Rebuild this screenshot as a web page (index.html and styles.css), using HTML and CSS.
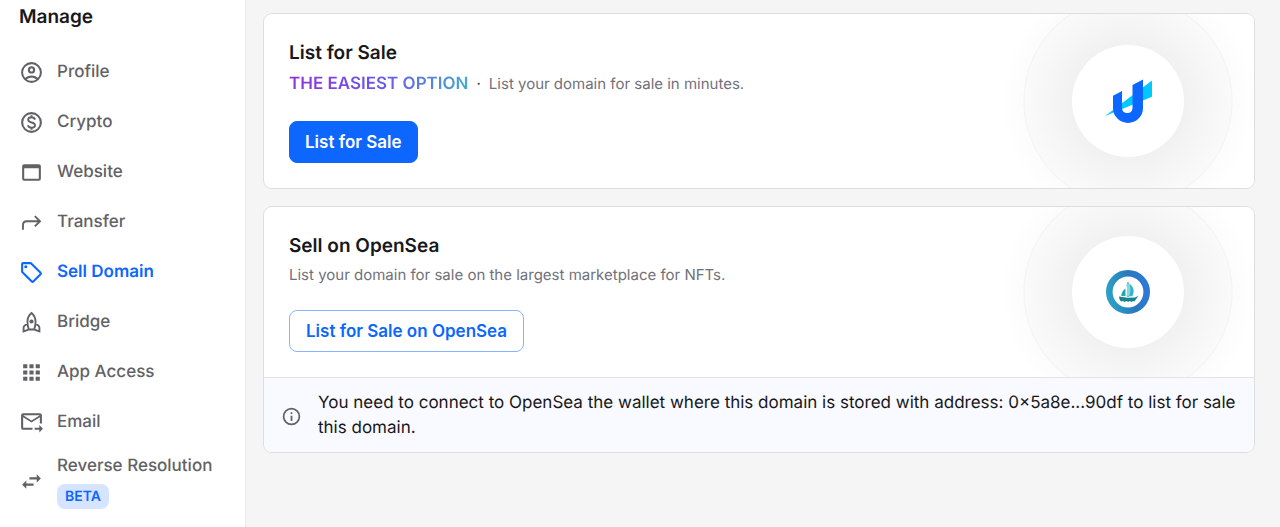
FILE: index.html
```html
<!DOCTYPE html>
<html lang="en">
<head>
<meta charset="utf-8">
<meta name="viewport" content="width=device-width, initial-scale=1">
<title>Sell Domain</title>
<link rel="stylesheet" href="styles.css">
</head>
<body>
<div class="layout">
  <aside class="sidebar">
    <h2 class="sidebar-title">Manage</h2>
    <nav class="nav" aria-label="Manage">
      <a class="nav-item" href="#profile">
        <svg class="icon" viewBox="0 0 24 24" aria-hidden="true"><path d="M12 2a10 10 0 1 0 0 20 10 10 0 0 0 0-20zM7.350 18.500C8.660 17.560 10.260 17 12 17s3.340.56 4.650 1.500C15.340 19.440 13.740 20 12 20s-3.340-.56-4.650-1.500zm10.790-1.380a9.950 9.950 0 0 0-12.280 0A8 8 0 1 1 20 12c0 1.950-.7 3.730-1.860 5.120zM12 6a3.500 3.500 0 1 0 0 7 3.500 3.500 0 0 0 0-7zm0 5a1.500 1.500 0 1 1 0-3 1.500 1.500 0 0 1 0 3z"/></svg>
        <span>Profile</span>
      </a>
      <a class="nav-item" href="#crypto">
        <svg class="icon" viewBox="0 0 24 24" aria-hidden="true"><path d="M12 2a10 10 0 1 0 0 20 10 10 0 0 0 0-20zm0 18a8 8 0 1 1 0-16 8 8 0 0 1 0 16z"/><path class="stroke" d="M15.400 9.200C14.900 7.700 13.600 7 12 7c-1.900 0-3.200.95-3.200 2.450 0 3.400 6.600 1.700 6.600 5.100 0 1.500-1.500 2.450-3.400 2.450-1.800 0-3.100-.9-3.500-2.300M12 5v2M12 17v2"/></svg>
        <span>Crypto</span>
      </a>
      <a class="nav-item" href="#website">
        <svg class="icon" viewBox="0 0 24 24" aria-hidden="true"><path d="M19 4H5a2 2 0 0 0-2 2v12a2 2 0 0 0 2 2h14a2 2 0 0 0 2-2V6a2 2 0 0 0-2-2zm0 14H5V8h14v10z"/></svg>
        <span>Website</span>
      </a>
      <a class="nav-item" href="#transfer">
        <svg class="icon" viewBox="0 0 24 24" aria-hidden="true"><path class="stroke" d="M3.800 19v-4.500c0-2.200 1.500-3.700 3.700-3.700H20M15.200 5.800l5 5-5 5"/></svg>
        <span>Transfer</span>
      </a>
      <a class="nav-item active" href="#sell" aria-current="page">
        <svg class="icon" viewBox="0 0 24 24" aria-hidden="true"><path d="m21.410 11.580-9-9C12.050 2.220 11.550 2 11 2H4c-1.100 0-2 .9-2 2v7c0 .55.22 1.050.59 1.420l9 9c.36.36.86.58 1.410.58s1.050-.22 1.410-.59l7-7c.37-.36.59-.86.59-1.410s-.23-1.060-.59-1.420zM13 20.010 4 11V4h7v-.01l9 9-7 7.020z"/><circle cx="6.500" cy="6.500" r="1.500"/></svg>
        <span>Sell Domain</span>
      </a>
      <a class="nav-item" href="#bridge">
        <svg class="icon" viewBox="0 0 24 24" aria-hidden="true"><path class="stroke" d="M12 2.800c-2.600 2.200-3.900 4.700-3.900 8.200 0 2.900.5 5.300 1.300 7.700h5.200c.8-2.400 1.300-4.800 1.300-7.700 0-3.500-1.300-6-3.900-8.200zM8.300 13l-3 2.200c-.6.500-.9 1-.9 1.800v3.600l4.800-1.800M15.700 13l3 2.200c.6.500.9 1 .9 1.800v3.600l-4.800-1.800"/><circle cx="12" cy="11" r="2"/></svg>
        <span>Bridge</span>
      </a>
      <a class="nav-item" href="#apps">
        <svg class="icon" viewBox="0 0 24 24" aria-hidden="true"><path d="M4 8h4V4H4v4zm6 12h4v-4h-4v4zm-6 0h4v-4H4v4zm0-6h4v-4H4v4zm6 0h4v-4h-4v4zm6-10v4h4V4h-4zm-6 4h4V4h-4v4zm6 6h4v-4h-4v4zm0 6h4v-4h-4v4z"/></svg>
        <span>App Access</span>
      </a>
      <a class="nav-item" href="#email">
        <svg class="icon" viewBox="0 0 24 24" aria-hidden="true"><path d="M20 3H4a2 2 0 0 0-2 2v12c0 1.100.9 2 2 2h9v-2H4V7l8 5 8-5v6h2V5a2 2 0 0 0-2-2zm-8 7L4 5h16l-8 5zm7.500 4.500 3.500 3.500-3.500 3.500V19H15v-2h4.500v-2.500z"/></svg>
        <span>Email</span>
      </a>
      <a class="nav-item" href="#reverse">
        <svg class="icon" viewBox="0 0 24 24" aria-hidden="true"><path d="M6.990 11 3 15l3.990 4v-3H14v-2H6.990v-3zM21 9l-3.990-4v3H10v2h7.010v3L21 9z"/></svg>
        <span class="nav-stack"><span>Reverse Resolution</span><span class="badge">BETA</span></span>
      </a>
    </nav>
  </aside>

  <main class="content">
    <section class="card">
      <div class="card-main">
        <div class="card-text">
          <h3 class="card-title">List for Sale</h3>
          <p class="card-sub card-sub-tall"><strong class="highlight">THE EASIEST OPTION</strong><span class="dot">·</span><span>List your domain for sale in minutes.</span></p>
          <button class="btn btn-primary" type="button">List for Sale</button>
        </div>
        <div class="art">
          <div class="disc">
            <svg class="logo" viewBox="0 0 48 48" role="img" aria-label="Unstoppable Domains">
              <path fill="#00c9ff" d="M48 3.500V19.800L1 39z"/>
              <path fill="#0d67fe" d="M39 2.500V31a15 15 0 0 1-30 0V18.700L18 14v17.500a5.300 5.300 0 0 0 10.500 0V8z"/>
            </svg>
          </div>
        </div>
      </div>
    </section>

    <section class="card">
      <div class="card-main">
        <div class="card-text">
          <h3 class="card-title">Sell on OpenSea</h3>
          <p class="card-sub">List your domain for sale on the largest marketplace for NFTs.</p>
          <button class="btn btn-outline" type="button">List for Sale on OpenSea</button>
        </div>
        <div class="art">
          <div class="disc">
            <svg class="logo" viewBox="0 0 48 48" role="img" aria-label="OpenSea">
              <defs>
                <linearGradient id="ring" x1="0" y1=".6" x2="1" y2=".4"><stop offset="0" stop-color="#2b9fc6"/><stop offset=".6" stop-color="#2779bd"/><stop offset="1" stop-color="#2f78d8"/></linearGradient>
              </defs>
              <circle cx="24" cy="24" r="18.700" fill="none" stroke="url(#ring)" stroke-width="6.600"/>
              <path fill="#23a7b5" d="M23.300 14.300h1.400V29h-1.400zM21.500 20.500V28h-4.200c.1-3.200 1.400-5.600 4.200-7.500z"/>
              <path fill="#83d8e3" d="M22 16.800c1.500 3.500 1.500 7.500.3 11.500h4.500V16.500c-1.700-.7-3.200-.6-4.800.3z"/>
              <path fill="#32b3c8" d="M25.500 16c4.300 2.800 5.500 7.300 2.700 12.300h-3c1.500-4.300 1.500-8.300.3-12.300z"/>
              <path fill="#16858b" d="M15 28.500l8.500 1.200 7.500-.2 3.500-1.700-2.500 3.400-1.500 2.300-1.500-.4-1.500 1-1.700-1-1.700 1-1.700-1-1.700 1-1.700-1-1.700.5c-1.400-1-2.200-2.800-2.300-5.100z"/>
            </svg>
          </div>
        </div>
      </div>
      <div class="notice">
        <svg class="notice-icon" viewBox="0 0 24 24" aria-hidden="true"><path d="M11 7h2v2h-2zm0 4h2v6h-2zm1-9a10 10 0 1 0 0 20 10 10 0 0 0 0-20zm0 18a8 8 0 1 1 0-16 8 8 0 0 1 0 16z"/></svg>
        <p class="notice-text">You need to connect to OpenSea the wallet where this domain is stored with address: 0×5a8e...90df to list for sale this domain.</p>
      </div>
    </section>
  </main>
</div>
</body>
</html>
```
FILE: styles.css
```css
* {
  box-sizing: border-box;
}

body {
  margin: 0;
  background: #f5f5f5;
  color: #18181b;
  font-family: Inter, "Liberation Sans", sans-serif;
  font-size: 17px;
  line-height: 25px;
  text-rendering: geometricPrecision;
}

h2, h3, p {
  margin: 0;
}

.layout {
  display: flex;
  min-height: 100vh;
}

.sidebar {
  flex: none;
  width: 246px;
  padding: 4px 16px 16px 19px;
  background: #fff;
  border-right: 1px solid #ebebeb;
}

.sidebar-title {
  margin-bottom: 25px;
  font-size: 19px;
  font-weight: 600;
  line-height: 25px;
}

.nav {
  display: flex;
  flex-direction: column;
  gap: 13px;
}

.nav-item {
  display: flex;
  align-items: center;
  gap: 13px;
  min-height: 37px;
  color: #626266;
  font-weight: 500;
  text-decoration: none;
  white-space: nowrap;
}

.nav-item.active {
  color: #0d67fe;
  font-weight: 600;
}

.icon {
  flex: none;
  width: 25px;
  height: 25px;
  fill: currentColor;
}

.stroke {
  fill: none;
  stroke: currentColor;
  stroke-width: 1.8;
}

.nav-stack {
  display: flex;
  flex-direction: column;
  align-items: flex-start;
  gap: 5px;
}

.badge {
  padding: 0 8px;
  border-radius: 8px;
  background: #d6e4ff;
  color: #0d67fe;
  font-size: 14px;
  font-weight: 600;
}

.content {
  flex: 1;
  min-width: 0;
  display: flex;
  flex-direction: column;
  gap: 17px;
  padding: 13px 25px 25px 17px;
}

.card {
  overflow: hidden;
  border: 1px solid #dedee0;
  border-radius: 9px;
  background: #fff;
}

.card-main {
  display: flex;
}

.card-text {
  flex: 1;
  min-width: 0;
  padding: 25px;
}

.card-title {
  font-size: 19px;
  font-weight: 600;
  line-height: 28px;
}

.card-sub {
  margin: 3px 0 23px;
  color: #71717a;
  font-size: 15px;
  line-height: 24px;
}

.card-sub-tall {
  line-height: 28px;
}

.highlight {
  background: linear-gradient(90deg, #9333d6, #6b55ea 50%, #44aad0);
  background-clip: text;
  -webkit-background-clip: text;
  color: transparent;
  font-size: 17px;
  font-weight: 600;
}

.dot {
  margin: 0 8px;
  color: #3f3f46;
}

.btn {
  height: 42px;
  padding: 0 16px;
  border: 1px solid #0d67fe;
  border-radius: 8px;
  font: inherit;
  font-weight: 600;
  cursor: pointer;
}

.btn-primary {
  padding: 0 15px;
  background: #0d67fe;
  color: #fff;
}

.btn-outline {
  border-color: #86b3ff;
  background: #fff;
  color: #0d67fe;
}

.art {
  flex: none;
  width: 252px;
  display: flex;
  align-items: center;
  justify-content: center;
  background: radial-gradient(circle, #f1f1f1 56px, #f5f5f5 75px, #fafafa 103px, #f3f3f3 104px, #fcfcfc 105px, #fff 128px);
}

.disc {
  display: grid;
  place-items: center;
  width: 112px;
  height: 112px;
  border-radius: 50%;
  background: #fff;
}

.logo {
  width: 48px;
  height: 48px;
}

.notice {
  display: flex;
  align-items: center;
  gap: 16px;
  padding: 13px 17px 11px;
  border-top: 1px solid #dfe3ea;
  background: #f8faff;
}

.notice-icon {
  flex: none;
  width: 21px;
  height: 21px;
  fill: #626266;
}
```
